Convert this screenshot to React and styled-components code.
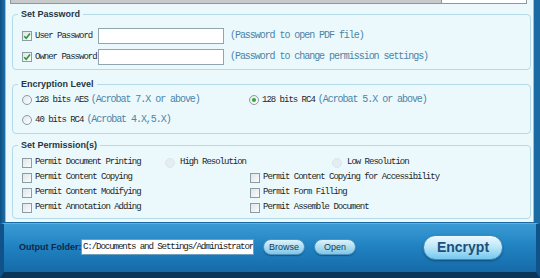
import styled, { createGlobalStyle } from "styled-components";

const GlobalStyle = createGlobalStyle`
  html, body {
    margin: 0;
    padding: 0;
    overflow: hidden;
    background: #11598f;
  }
`;

const Frame = styled.div`
  width: 540px;
  height: 278px;
  display: flex;
  flex-direction: column;
  background: linear-gradient(90deg, #0d4e80 0, #1a6aa4 4px, #1a6aa4 100%);
`;

const Panel = styled.div`
  height: 222px;
  margin: 0 6px 0 5px;
  padding: 0 2px 0 6px;
  background: #ebf9fd;
  border-left: 1px solid #8fc3d6;
  border-right: 1px solid #8fc3d6;
  display: flex;
  flex-direction: column;
`;

const TopStrip = styled.div`
  height: 3px;
  margin: 0 4px 0 -2px;
  display: flex;
  border: 1px solid #8a9aa2;
  border-top: none;
  background: #fff;
`;

const StripThumb = styled.div`
  width: 430px;
  background: #c7c9ca;
  border-right: 1px solid #8a9aa2;
`;

const Group = styled.fieldset`
  margin: ${(p) => p.$top}px 0 0 0;
  padding: ${(p) => p.$pad};
  border: 1px solid #b3dae6;
  border-radius: 4px;
  min-width: 0;
`;

const Legend = styled.legend`
  padding: 0 3px;
  margin-left: -4px;
  font: bold 9px/11px "Liberation Sans", Arial, sans-serif;
  color: #1f3644;
`;

const PasswordRow = styled.div`
  display: flex;
  align-items: center;
  height: 16px;
  & + & {
    margin-top: 5px;
  }
`;

const CheckLabel = styled.label`
  display: flex;
  align-items: center;
  gap: 3px;
  width: ${(p) => (p.$width ? `${p.$width}px` : "auto")};
  height: 15px;
  flex-shrink: 0;
`;

const Box = styled.span`
  width: 8px;
  height: 8px;
  border: 1px solid #8d9ca4;
  background: linear-gradient(135deg, #dfe5e8, #fbfcfc);
  display: flex;
  align-items: center;
  justify-content: center;
  flex-shrink: 0;
`;

const Circle = styled.span`
  width: 8px;
  height: 8px;
  border-radius: 50%;
  border: 1px solid ${(p) => (p.$disabled ? "#dbe6ea" : "#8d9ca4")};
  background: ${(p) =>
    p.$disabled ? "#e4eef1" : "linear-gradient(135deg, #e0e6e9, #ffffff)"};
  display: flex;
  align-items: center;
  justify-content: center;
  flex-shrink: 0;
`;

const Dot = styled.span`
  width: 4px;
  height: 4px;
  border-radius: 50%;
  background: #36a338;
`;

const Label = styled.span`
  font: 9px/1 "Liberation Mono", "Courier New", monospace;
  letter-spacing: -1px;
  color: #262626;
  white-space: nowrap;
`;

const Hint = styled.span`
  font: 10px/1 "Liberation Mono", "Courier New", monospace;
  letter-spacing: -1.05px;
  color: #4d84a6;
  white-space: nowrap;
  margin-left: ${(p) => p.$gap || 0}px;
`;

const TextBox = styled.input`
  box-sizing: border-box;
  width: 126px;
  height: 16px;
  margin: 0;
  border: 1px solid #8fa6b0;
  background: #fff;
  outline: none;
`;

const OptionGrid = styled.div`
  display: grid;
  grid-template-columns: 227px 1fr;
  row-gap: 6px;
`;

const Option = styled.label`
  display: flex;
  align-items: center;
  gap: 3px;
  height: 14px;
`;

const PermGrid = styled.div`
  display: grid;
  grid-template-columns: 143px 85px 82px 1fr;
  grid-auto-rows: 15px;
  align-items: center;
`;

const Cell = styled.div`
  grid-column: ${(p) => p.$col};
  display: flex;
  align-items: center;
  gap: ${(p) => p.$gap || 3}px;
`;

const Footer = styled.div`
  flex: 1;
  display: flex;
  align-items: center;
  padding: 0 0 2px 15px;
  margin-top: 1px;
  border-left: 4px solid #10538a;
  border-right: 4px solid #10538a;
  border-bottom: 6px solid #0b365a;
  border-top: 1px solid #5fb0dc;
  background: linear-gradient(180deg, #3a9bd4 0%, #2183c2 45%, #166aa8 100%);
`;

const FolderLabel = styled.span`
  font: bold 9px/1 "Liberation Sans", Arial, sans-serif;
  color: #0e2748;
  width: 58px;
  margin-right: 4px;
  white-space: nowrap;
`;

const PathField = styled.div`
  width: 173px;
  height: 16px;
  box-sizing: border-box;
  background: #fff;
  border: 1px solid #6f9fbf;
  display: flex;
  align-items: center;
  padding-left: 1px;
  font: 9.2px/1 "Liberation Mono", "Courier New", monospace;
  letter-spacing: -1.15px;
  color: #222;
  white-space: nowrap;
  overflow: hidden;
`;

const PillButton = styled.button`
  width: 42px;
  height: 16px;
  margin-left: 9px;
  padding: 0;
  border: 1px solid #4f93bd;
  border-radius: 9px;
  background: linear-gradient(180deg, #dff3fb 0%, #a9dcf1 55%, #7fc6e8 100%);
  box-shadow: 0 1px 1px rgba(0, 30, 60, 0.35);
  font: 9px/1 "Liberation Sans", Arial, sans-serif;
  color: #1d3b52;
`;

const EncryptButton = styled.button`
  width: 80px;
  height: 25px;
  margin-left: 67px;
  padding: 0;
  border: 1px solid #3a8cbd;
  border-radius: 13px;
  background: linear-gradient(180deg, #eef9fe 0%, #bfe8f8 45%, #74c8ef 100%);
  box-shadow: 0 1px 2px rgba(0, 30, 60, 0.45);
  font: bold 14px/1 "Liberation Sans", Arial, sans-serif;
  color: #1c4f7c;
`;

function Check({ checked }) {
  return (
    <Box>
      {checked && (
        <svg width="8" height="8" viewBox="0 0 8 8">
          <path d="M1.2 4.2 L3.2 6.2 L7 1.6" fill="none" stroke="#2b9a2e" strokeWidth="1.6" />
        </svg>
      )}
    </Box>
  );
}

function Radio({ checked, disabled }) {
  return <Circle $disabled={disabled}>{checked && <Dot />}</Circle>;
}

export default function App() {
  return (
    <>
      <GlobalStyle />
      <Frame>
        <Panel>
          <TopStrip>
            <StripThumb />
          </TopStrip>

          <Group $top={5} $pad="8px 8px 4px 9px">
            <Legend>Set Password</Legend>
            <PasswordRow>
              <CheckLabel $width={76}>
                <Check checked />
                <Label>User Password</Label>
              </CheckLabel>
              <TextBox />
              <Hint $gap={6}>(Password to open PDF file)</Hint>
            </PasswordRow>
            <PasswordRow>
              <CheckLabel $width={76}>
                <Check checked />
                <Label>Owner Password</Label>
              </CheckLabel>
              <TextBox />
              <Hint $gap={6}>(Password to change permission settings)</Hint>
            </PasswordRow>
          </Group>

          <Group $top={9} $pad="3px 8px 6px 9px">
            <Legend>Encryption Level</Legend>
            <OptionGrid>
              <Option>
                <Radio />
                <Label>128 bits AES</Label>
                <Hint>(Acrobat 7.X or above)</Hint>
              </Option>
              <Option>
                <Radio checked />
                <Label>128 bits RC4</Label>
                <Hint>(Acrobat 5.X or above)</Hint>
              </Option>
              <Option>
                <Radio />
                <Label>40 bits RC4</Label>
                <Hint>(Acrobat 4.X,5.X)</Hint>
              </Option>
            </OptionGrid>
          </Group>

          <Group $top={6} $pad="4px 8px 3px 9px">
            <Legend>Set Permission(s)</Legend>
            <PermGrid>
              <Cell $col="1">
                <Check />
                <Label>Permit Document Printing</Label>
              </Cell>
              <Cell $col="2" $gap={5}>
                <Radio disabled />
                <Label>High Resolution</Label>
              </Cell>
              <Cell $col="4" $gap={5}>
                <Radio disabled />
                <Label>Low Resolution</Label>
              </Cell>

              <Cell $col="1">
                <Check />
                <Label>Permit Content Copying</Label>
              </Cell>
              <Cell $col="3 / 5">
                <Check />
                <Label>Permit Content Copying for Accessibility</Label>
              </Cell>

              <Cell $col="1">
                <Check />
                <Label>Permit Content Modifying</Label>
              </Cell>
              <Cell $col="3 / 5">
                <Check />
                <Label>Permit Form Filling</Label>
              </Cell>

              <Cell $col="1">
                <Check />
                <Label>Permit Annotation Adding</Label>
              </Cell>
              <Cell $col="3 / 5">
                <Check />
                <Label>Permit Assemble Document</Label>
              </Cell>
            </PermGrid>
          </Group>
        </Panel>

        <Footer>
          <FolderLabel>Output Folder:</FolderLabel>
          <PathField>C:/Documents and Settings/Administrator</PathField>
          <PillButton>Browse</PillButton>
          <PillButton>Open</PillButton>
          <EncryptButton>Encrypt</EncryptButton>
        </Footer>
      </Frame>
    </>
  );
}
